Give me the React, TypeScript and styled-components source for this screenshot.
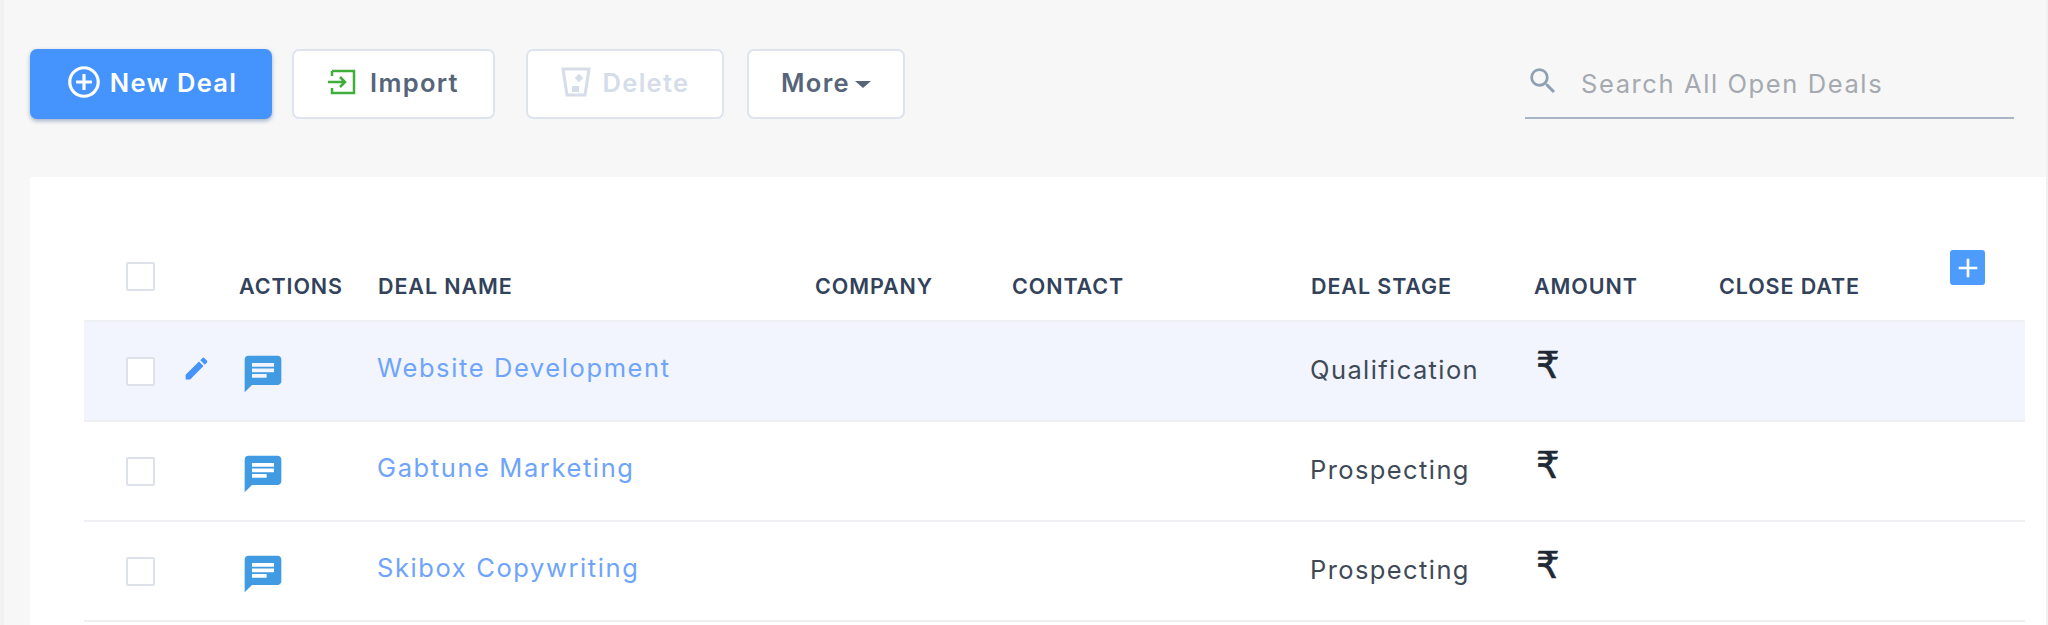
import { createGlobalStyle, styled } from "styled-components";
import { MdChat, MdEdit, MdSearch, MdAdd, MdAddCircleOutline } from "react-icons/md";

const GlobalStyle = createGlobalStyle`
  html, body {
    margin: 0;
    height: 625px;
    overflow: hidden;
    background: #f7f7f7;
    font-family: Inter, "Noto Sans", sans-serif;
  }
`;

const Page = styled.div`
  height: 625px;
  padding: 49px 0 0 26px;
  box-sizing: border-box;
  border-left: 4px solid #f1f1f4;
  border-right: 2px solid #f1f1f4;
  overflow: hidden;
`;
const Toolbar = styled.div`
  display: flex;
  align-items: center;
  height: 70px;
  margin-bottom: 58px;
`;
const Button = styled.button<{
  $w: number;
  $ml?: number;
  $gap?: number;
  $primary?: boolean;
  $disabled?: boolean;
}>`
  width: ${(p) => p.$w}px;
  height: 70px;
  margin-left: ${(p) => p.$ml ?? 0}px;
  box-sizing: border-box;
  display: flex;
  align-items: center;
  justify-content: center;
  gap: ${(p) => p.$gap ?? 9}px;
  padding: 0 0 4px;
  border-radius: 7px;
  font-family: inherit;
  font-size: 25.5px;
  letter-spacing: 1.3px;
  font-weight: 600;
  background: ${(p) => (p.$primary ? "#4593fd" : "#fff")};
  color: ${(p) => (p.$primary ? "#fff" : p.$disabled ? "#d5dde8" : "#56657a")};
  border: ${(p) => (p.$primary ? "none" : "2px solid #dde4ee")};
  box-shadow: ${(p) => (p.$primary ? "0 2px 4px rgba(60,90,140,0.45)" : "none")};
`;
const Caret = styled.span`
  width: 0;
  height: 0;
  margin: 4px 0 0 -4px;
  border-left: 8px solid transparent;
  border-right: 8px solid transparent;
  border-top: 7px solid #56657a;
`;
const Search = styled.div`
  margin-left: auto;
  width: 489px;
  height: 70px;
  box-sizing: border-box;
  display: flex;
  align-items: center;
  gap: 21px;
  padding-left: 1px;
  border-bottom: 2px solid #a9b5c6;
  color: #a5a9b0;
  font-size: 25.5px;
  letter-spacing: 1.6px;
  margin-right: 32px;
`;
const SearchIcon = styled(MdSearch)`
  font-size: 34px;
  color: #8fa0b4;
  margin-top: -4px;
`;
const Panel = styled.div`
  background: #fff;
  height: 448px;
  padding-left: 54px;
`;
const Row = styled.div<{ $head?: boolean; $active?: boolean }>`
  display: grid;
  grid-template-columns: 58px 55px 139px 437px 197px 299px 223px 185px 231px 1fr;
  width: 1941px;
  height: ${(p) => (p.$head ? 145 : 100)}px;
  box-sizing: border-box;
  border-bottom: 2px solid #eef0f4;
  background: ${(p) => (p.$active ? "#f2f5fd" : "transparent")};
  align-items: center;
  padding-left: 42px;
`;
const HeadCell = styled.div`
  align-self: end;
  padding-bottom: 21px;
  font-size: 21.5px;
  letter-spacing: 0.9px;
  font-weight: 600;
  color: #33425b;
`;
const Box = styled.span<{ $head?: boolean }>`
  display: block;
  width: 29px;
  height: 29px;
  box-sizing: border-box;
  background: #fff;
  border: 2px solid #dde2ea;
  border-radius: 2px;
  align-self: ${(p) => (p.$head ? "end" : "center")};
  margin-bottom: ${(p) => (p.$head ? 29 : 0)}px;
`;
const Pencil = styled(MdEdit)`
  font-size: 29px;
  color: #4593fd;
  margin-left: -2px;
  margin-top: -2px;
`;
const Chat = styled(MdChat)`
  font-size: 44px;
  color: #419be3;
  margin-left: 2px;
  margin-top: 6px;
`;
const DealLink = styled.a`
  font-size: 25.5px;
  letter-spacing: 1.6px;
  color: #6ea4fb;
  margin-top: -8px;
  margin-left: -1px;
`;
const Stage = styled.div`
  font-size: 25.5px;
  letter-spacing: 1.4px;
  color: #3f4a57;
  margin-top: -4px;
  margin-left: -1px;
`;
const Rupee = styled.div`
  font-size: 37px;
  color: #1f2933;
  font-family: "DejaVu Sans", sans-serif;
  -webkit-text-stroke: 0.6px #1f2933;
  margin-top: -12px;
  margin-left: 2px;
`;
const AddBox = styled.span`
  display: flex;
  align-items: center;
  justify-content: center;
  width: 35px;
  height: 35px;
  background: #4d9bfb;
  border-radius: 3px;
  color: #fff;
  font-size: 32px;
  align-self: end;
  margin-bottom: 35px;
`;

const deals = [
  { name: "Website Development", stage: "Qualification", active: true },
  { name: "Gabtune Marketing", stage: "Prospecting" },
  { name: "Skibox Copywriting", stage: "Prospecting" }
];

export default function App() {
  return (
    <Page>
      <GlobalStyle />
      <Toolbar>
        <Button $w={242} $gap={7} $primary>
          <MdAddCircleOutline size={38} />
          New Deal
        </Button>
        <Button $w={203} $ml={20} $gap={12}>
          <svg width="30" height="28" viewBox="0 0 30 28" fill="none">
            <path d="M4 3h22v22H4v-5" stroke="#3fae3a" strokeWidth="2.5" />
            <path d="M4 3v5" stroke="#3fae3a" strokeWidth="2.5" />
            <path d="M0 14h17M12 9l5 5-5 5" stroke="#3fae3a" strokeWidth="2.5" />
          </svg>
          Import
        </Button>
        <Button $w={198} $ml={31} $gap={12} $disabled>
          <svg width="30" height="32" viewBox="0 0 30 32" fill="none">
            <path d="M2 3h26l-4 26H6z" stroke="#d5dde8" strokeWidth="3" />
            <rect x="11" y="20" width="7" height="6" fill="#d5dde8" />
            <rect x="15" y="9" width="6" height="6" fill="#d5dde8" transform="rotate(45 18 12)" />
          </svg>
          Delete
        </Button>
        <Button $w={158} $ml={23}>
          More
          <Caret />
        </Button>
        <Search>
          <SearchIcon />
          Search All Open Deals
        </Search>
      </Toolbar>
      <Panel>
        <Row $head>
          <Box $head />
          <span />
          <HeadCell>ACTIONS</HeadCell>
          <HeadCell>DEAL NAME</HeadCell>
          <HeadCell>COMPANY</HeadCell>
          <HeadCell>CONTACT</HeadCell>
          <HeadCell>DEAL STAGE</HeadCell>
          <HeadCell>AMOUNT</HeadCell>
          <HeadCell>CLOSE DATE</HeadCell>
          <AddBox>
            <MdAdd />
          </AddBox>
        </Row>
        {deals.map((d) => (
          <Row key={d.name} $active={d.active}>
            <Box />
            <span>{d.active && <Pencil />}</span>
            <Chat />
            <DealLink>{d.name}</DealLink>
            <span />
            <span />
            <Stage>{d.stage}</Stage>
            <Rupee>₹</Rupee>
          </Row>
        ))}
      </Panel>
    </Page>
  );
}
